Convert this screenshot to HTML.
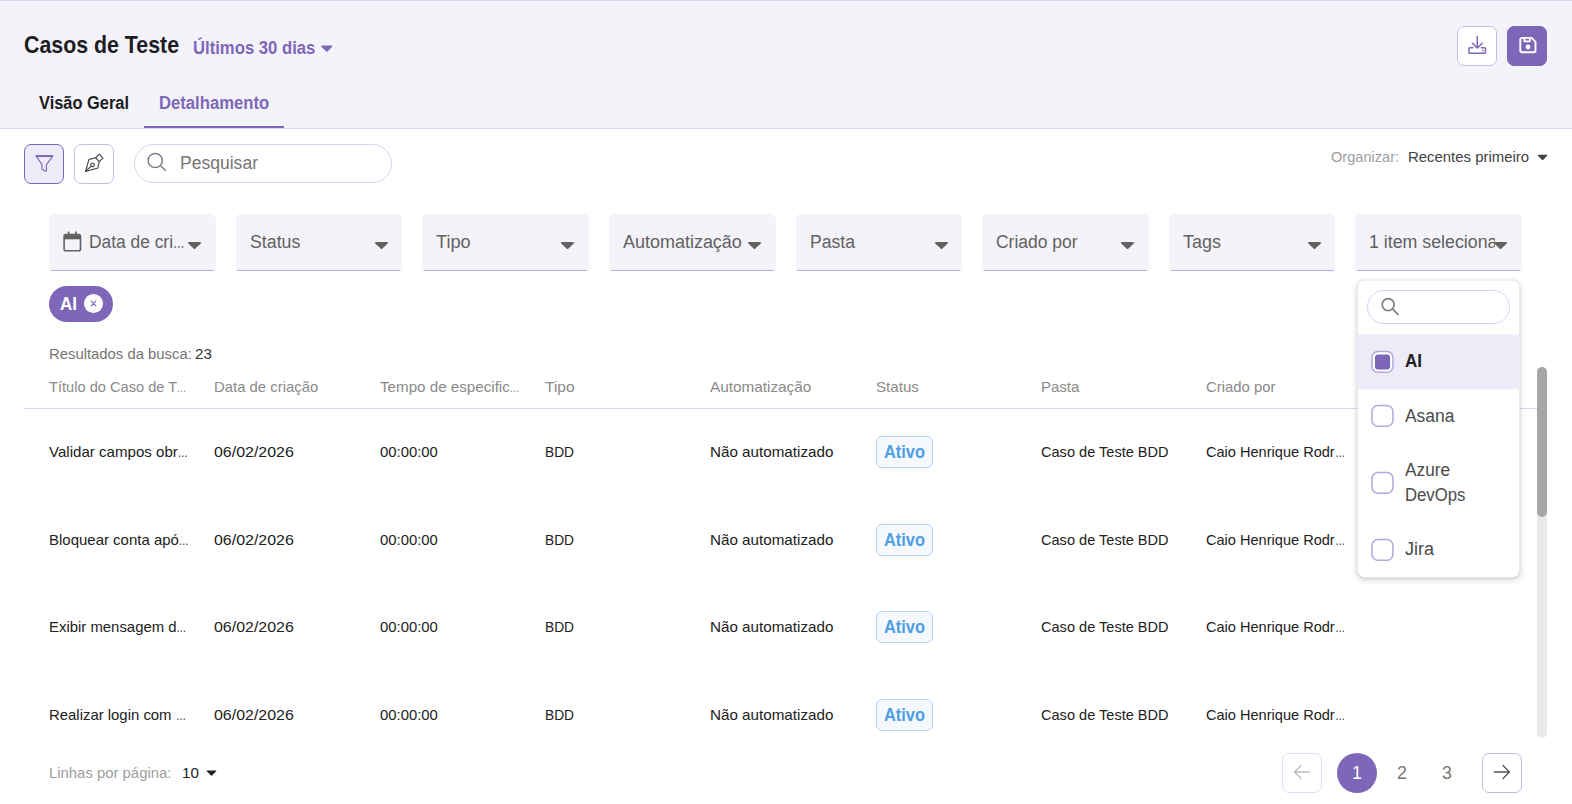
<!DOCTYPE html>
<html lang="pt-BR">
<head>
<meta charset="utf-8">
<title>Casos de Teste</title>
<style>
html,body{margin:0;padding:0}
body{width:1572px;height:804px;overflow:hidden;background:#fff;position:relative;font-family:"Liberation Sans",sans-serif;color:#212121}
.a{position:absolute}
.e{display:inline-block;width:.669em;transform:scaleX(.669);transform-origin:0 0}
.t{position:absolute;white-space:nowrap;line-height:20px;height:20px;transform-origin:0 0}
#hdr{left:0;top:0;width:1572px;height:127px;background:#f4f3fa;border-top:1px solid #dcd7f0;border-bottom:1px solid #dcd7f0}
.ibtn{position:absolute;width:38px;height:38px;border:1px solid #c8bde8;border-radius:7px;background:#fff}
.fbox{position:absolute;top:214px;width:166.625px;height:57px;background:#f4f3fa;border-radius:5px 5px 2px 2px}
.fbox i{position:absolute;left:1.8px;right:1.8px;bottom:0;height:1px;background:#b8aade}
.car{position:absolute;width:13px;height:7px}
.badge{position:absolute;left:876.1px;width:54.7px;height:29.5px;border:1px solid #b7d5f3;border-radius:6px;background:#f5f9fe}
</style>
</head>
<body>
<div id="hdr" class="a"></div>
<svg class="a" style="left:320px;top:44px" width="14" height="9" viewBox="0 0 14 9"><path d="M2 1.5h9.6a.8.8 0 0 1 .6 1.3L7.5 7.6a.8.8 0 0 1-1.2 0L1.4 2.8A.8.8 0 0 1 2 1.5z" fill="#7e66b8"/></svg>
<div class="a" style="left:144px;top:126px;width:140px;height:2px;background:#7e66b8"></div>

<!-- header buttons -->
<div class="ibtn" style="left:1457px;top:26px"></div>
<div class="ibtn" style="left:1507px;top:26px;background:#7e66b8;border-color:#7e66b8"></div>
<svg class="a" style="left:1467px;top:35px" width="20" height="20" viewBox="0 0 20 20" fill="none" stroke="#7e66b8" stroke-width="1.5" stroke-linecap="round" stroke-linejoin="round"><path d="M10.3 1.6v11.2M5.4 8.2l4.9 4.8 4.9-4.8"/><path d="M6 12.7H3a1.1 1.1 0 0 0-1.1 1.1v3.4A1.1 1.1 0 0 0 3 18.3h14.4a1.1 1.1 0 0 0 1.1-1.1v-3.4a1.1 1.1 0 0 0-1.1-1.1h-3"/><circle cx="15.8" cy="15.5" r=".35" fill="#7e66b8" stroke-width="1"/></svg>
<svg class="a" style="left:1518.5px;top:36px" width="18" height="18" viewBox="0 0 18 18" fill="none" stroke="#fff" stroke-width="1.9" stroke-linejoin="round"><path d="M2.6 1.9h9.6l3.9 3.9v8.7a1.7 1.7 0 0 1-1.7 1.7H2.6a1.7 1.7 0 0 1-1.7-1.7V3.6a1.7 1.7 0 0 1 1.7-1.7z" transform="translate(.4 0)"/><path d="M5.4 2.2v3.2h5.4V2.2" stroke-width="1.9"/><circle cx="9" cy="11" r="1.8" fill="#fff" stroke-width="1.2"/></svg>

<!-- toolbar -->
<div class="ibtn" style="left:24px;top:144px;background:#eeebf8;border-color:#7e66b8"></div>
<div class="ibtn" style="left:74px;top:144px"></div>
<div class="a" style="left:134px;top:144px;width:256px;height:37px;border:1px solid #d9d2f0;border-radius:20px;background:#fff"></div>
<svg class="a" style="left:34px;top:154px" width="21" height="19" viewBox="0 0 21 19" fill="none" stroke="#7e66b8" stroke-width="1.15" stroke-linejoin="round"><path d="M2 2h17l-6.6 8.6v6.3h-2L8 14.9v-4.3z"/><path d="M2 2.1h17" stroke-width="1.9"/></svg>
<svg class="a" style="left:84px;top:152px" width="21" height="21" viewBox="0 0 21 21" fill="none" stroke="#424242" stroke-width="1.1" stroke-linejoin="round" stroke-linecap="round"><path d="M15.3 2.1L19 6.1 15.2 9.6 11.7 5.8z"/><path d="M11.7 5.8L5 7.4 1.5 19.5 13.9 16l1.3-6.4"/><circle cx="8.5" cy="12.8" r="1.8"/><path d="M7.2 14.1L1.5 19.5"/></svg>
<svg class="a" style="left:146px;top:152px" width="21" height="20" viewBox="0 0 21 20" fill="none" stroke="#808080" stroke-width="1.5" stroke-linecap="round"><circle cx="9.2" cy="8.5" r="7.1"/><path d="M14.4 13.7l5 4.5"/></svg>
<svg class="a" style="left:1537px;top:154px" width="11" height="7" viewBox="0 0 11 7"><path d="M1.3 .8h8.4a.6.6 0 0 1 .45 1L6 6.1a.6.6 0 0 1-.9 0L.85 1.8a.6.6 0 0 1 .45-1z" fill="#424242"/></svg>

<!-- filters -->
<div class="fbox" style="left:49.000px"><i></i></div>
<div class="fbox" style="left:235.625px"><i></i></div>
<div class="fbox" style="left:422.250px"><i></i></div>
<div class="fbox" style="left:608.875px"><i></i></div>
<div class="fbox" style="left:795.500px"><i></i></div>
<div class="fbox" style="left:982.125px"><i></i></div>
<div class="fbox" style="left:1168.750px"><i></i></div>
<div class="fbox" style="left:1355.375px"><i></i></div>
<svg class="a" style="left:63px;top:231px" width="19" height="21" viewBox="0 0 19 21" fill="none" stroke="#616161" stroke-width="1.6"><rect x="1.1" y="3.6" width="16.4" height="16.2" rx="1.8"/><path d="M1.1 6.2h16.4" stroke-width="4.2"/><path d="M5.6 .6v3M13 .6v3" stroke-width="1.7"/></svg>

<!-- chip -->
<div class="a" style="left:49px;top:286px;width:64px;height:36px;border-radius:18px;background:#7e66b8"></div>
<div class="a" style="left:84.3px;top:294.2px;width:18.6px;height:18.6px;border-radius:50%;background:#fff"></div>
<svg class="a" style="left:90px;top:300px" width="7" height="7" viewBox="0 0 7 7" stroke="#7e66b8" stroke-width="1.2" stroke-linecap="round"><path d="M1.2 1.2l4.6 4.6M5.8 1.2l-4.6 4.6"/></svg>

<!-- table -->
<div class="a" style="left:24px;top:408px;width:1513px;height:1px;background:#dcd6f5"></div>
<div class="badge" style="top:436.2px"></div>
<div class="badge" style="top:524.2px"></div>
<div class="badge" style="top:611.2px"></div>
<div class="badge" style="top:699.0px"></div>

<!-- scrollbar -->
<div class="a" style="left:1537px;top:367px;width:10px;height:371px;border-radius:5px;background:#e9e9e9"></div>
<div class="a" style="left:1537px;top:367px;width:10px;height:150px;border-radius:5px;background:#a6a6a6"></div>

<!-- dropdown panel -->
<div class="a" id="panel" style="left:1357px;top:280px;width:162px;height:296.6px;transform:translate(.5px,.4px);border-radius:7px;background:#fff;box-shadow:0 2px 6px rgba(0,0,0,.17),0 0 2px rgba(0,0,0,.1);overflow:hidden">
<div class="a" style="left:0;top:53.5px;width:162px;height:55px;background:#eeebf8"></div>
</div>
<div class="a" style="left:1367px;top:290px;width:141px;height:32px;border:1px solid #d9d2f0;border-radius:17px;background:#fff"></div>
<svg class="a" style="left:1380px;top:297px" width="20" height="19" viewBox="0 0 20 19" fill="none" stroke="#808080" stroke-width="1.7" stroke-linecap="round"><circle cx="8.2" cy="7.6" r="6"/><path d="M12.7 12.1l5.3 5.3"/></svg>
<svg class="a" style="left:1370px;top:349.0px" width="25" height="25" viewBox="0 0 25 25"><rect x="1.95" y="2.45" width="21" height="20.8" rx="6" fill="#fff" stroke="#b5a6de" stroke-width="1.5"/><rect x="5" y="5.4" width="15.1" height="15" rx="3" fill="#7e66b8"/></svg>
<svg class="a" style="left:1370px;top:403.2px" width="25" height="25" viewBox="0 0 25 25"><rect x="1.95" y="2.45" width="21" height="20.8" rx="6" fill="#fff" stroke="#b5a6de" stroke-width="1.5"/></svg>
<svg class="a" style="left:1370px;top:470.2px" width="25" height="25" viewBox="0 0 25 25"><rect x="1.95" y="2.45" width="21" height="20.8" rx="6" fill="#fff" stroke="#b5a6de" stroke-width="1.5"/></svg>
<svg class="a" style="left:1370px;top:537.1px" width="25" height="25" viewBox="0 0 25 25"><rect x="1.95" y="2.45" width="21" height="20.8" rx="6" fill="#fff" stroke="#b5a6de" stroke-width="1.5"/></svg>

<!-- footer -->
<svg class="a" style="left:206px;top:770px" width="11" height="6" viewBox="0 0 11 6"><path d="M1.2 .4h8.6a.5.5 0 0 1 .4.9L6 5.5a.7.7 0 0 1-1 0L.8 1.3a.5.5 0 0 1 .4-.9z" fill="#212121"/></svg>
<div class="ibtn" style="left:1282px;top:753px;border-color:#e3ddf5"></div>
<svg class="a" style="left:1293px;top:764px" width="18" height="16" viewBox="0 0 18 16" fill="none" stroke="#bdbdbd" stroke-width="1.3" stroke-linecap="round" stroke-linejoin="round"><path d="M16.5 8H1.5M8 1.5L1.5 8 8 14.5"/></svg>
<div class="a" style="left:1337px;top:753px;width:40px;height:40px;border-radius:50%;background:#7e66b8"></div>
<div class="ibtn" style="left:1482px;top:753px;border-color:#c5b9e8"></div>
<svg class="a" style="left:1493px;top:764px" width="18" height="16" viewBox="0 0 18 16" fill="none" stroke="#555" stroke-width="1.3" stroke-linecap="round" stroke-linejoin="round"><path d="M1.5 8h15M10 1.5L16.5 8 10 14.5"/></svg>

<!-- texts -->
<div class="t" id="t_title" style="left:24.0px;top:35.0px;font-size:24px;color:#1c1b1f;transform:scaleX(0.8893);font-weight:bold">Casos de Teste</div>
<div class="t" id="t_last" style="left:193.0px;top:38.0px;font-size:17.6px;color:#7e66b8;transform:scaleX(0.9481);font-weight:bold">Últimos 30 dias</div>
<div class="t" id="t_tab1" style="left:39.0px;top:93.0px;font-size:17.6px;color:#1c1b1f;transform:scaleX(0.9328);font-weight:bold">Visão Geral</div>
<div class="t" id="t_tab2" style="left:159.0px;top:93.0px;font-size:17.6px;color:#7e66b8;transform:scaleX(0.9470);font-weight:bold">Detalhamento</div>
<div class="t" id="t_search" style="left:180.0px;top:153.0px;font-size:17.6px;color:#757575;transform:scaleX(0.9966)">Pesquisar</div>
<div class="t" id="t_org" style="left:1331.0px;top:147.0px;font-size:15px;color:#9e9e9e;transform:scaleX(0.9723)">Organizar:</div>
<div class="t" id="t_rec" style="left:1408.0px;top:147.0px;font-size:15px;color:#424242;transform:scaleX(0.9942)">Recentes primeiro</div>
<div class="t" id="f1" style="left:89.0px;top:232.0px;font-size:17.6px;color:#616161;transform:scaleX(0.9876)">Data de cri<span class="e">…</span></div>
<div class="t" id="f2" style="left:250.0px;top:232.0px;font-size:17.6px;color:#616161;transform:scaleX(1.0083)">Status</div>
<div class="t" id="f3" style="left:436.0px;top:232.0px;font-size:17.6px;color:#616161;transform:scaleX(1.0331)">Tipo</div>
<div class="t" id="f4" style="left:623.0px;top:232.0px;font-size:17.6px;color:#616161;transform:scaleX(1.0211)">Automatização</div>
<div class="t" id="f5" style="left:810.0px;top:232.0px;font-size:17.6px;color:#616161;transform:scaleX(0.9996)">Pasta</div>
<div class="t" id="f6" style="left:996.0px;top:232.0px;font-size:17.6px;color:#616161;transform:scaleX(0.9915)">Criado por</div>
<div class="t" id="f7" style="left:1183.0px;top:232.0px;font-size:17.6px;color:#616161;transform:scaleX(1.0238)">Tags</div>
<div class="a" style="left:1369.0px;top:230.0px;width:126px;height:24px;overflow:hidden"><div class="t" id="f8" style="left:0;top:2px;font-size:17.6px;color:#616161;transform:scaleX(1.0100)">1 item selecionado</div></div>
<div class="t" id="t_chip" style="left:60.0px;top:293.5px;font-size:17.6px;color:#fff;transform:scaleX(0.9644);font-weight:bold">AI</div>
<div class="t" id="t_res" style="left:49.0px;top:343.5px;font-size:15px;color:#757575;transform:scaleX(0.9899)">Resultados da busca:</div>
<div class="t" id="t_res2" style="left:195.3px;top:343.5px;font-size:15px;color:#333;transform:scaleX(1.0104)">23</div>
<div class="t" id="h1" style="left:49.0px;top:377.0px;font-size:15px;color:#8a8a8a;transform:scaleX(0.9750)">Título do Caso de T<span class="e">…</span></div>
<div class="t" id="h2" style="left:214.0px;top:377.0px;font-size:15px;color:#8a8a8a;transform:scaleX(0.9921)">Data de criação</div>
<div class="t" id="h3" style="left:380.0px;top:377.0px;font-size:15px;color:#8a8a8a;transform:scaleX(1.0108)">Tempo de especific<span class="e">…</span></div>
<div class="t" id="h4" style="left:545.0px;top:377.0px;font-size:15px;color:#8a8a8a;transform:scaleX(1.0332)">Tipo</div>
<div class="t" id="h5" style="left:710.0px;top:377.0px;font-size:15px;color:#8a8a8a;transform:scaleX(1.0210)">Automatização</div>
<div class="t" id="h6" style="left:875.5px;top:377.0px;font-size:15px;color:#8a8a8a;transform:scaleX(1.0084)">Status</div>
<div class="t" id="h7" style="left:1041.0px;top:377.0px;font-size:15px;color:#8a8a8a;transform:scaleX(0.9997)">Pasta</div>
<div class="t" id="h8" style="left:1206.0px;top:377.0px;font-size:15px;color:#8a8a8a;transform:scaleX(0.9915)">Criado por</div>
<div class="t" id="r1c1" style="left:49.0px;top:442.0px;font-size:15px;color:#212121;transform:scaleX(1.0053)">Validar campos obr<span class="e">…</span></div>
<div class="t" id="r1c2" style="left:214.0px;top:442.0px;font-size:15px;color:#212121;transform:scaleX(1.0632)">06/02/2026</div>
<div class="t" id="r1c3" style="left:380.0px;top:442.0px;font-size:15px;color:#212121;transform:scaleX(0.9907)">00:00:00</div>
<div class="t" id="r1c4" style="left:545.0px;top:442.0px;font-size:15px;color:#212121;transform:scaleX(0.9167)">BDD</div>
<div class="t" id="r1c5" style="left:710.0px;top:442.0px;font-size:15px;color:#212121;transform:scaleX(1.0132)">Não automatizado</div>
<div class="t" id="r1c7" style="left:1041.0px;top:442.0px;font-size:15px;color:#212121;transform:scaleX(0.9706)">Caso de Teste BDD</div>
<div class="t" id="r1c8" style="left:1206.0px;top:442.0px;font-size:15px;color:#212121;transform:scaleX(0.9709)">Caio Henrique Rodr<span class="e">…</span></div>
<div class="t" id="r1c6" style="left:884.0px;top:442.0px;font-size:17.6px;color:#4f9ee3;transform:scaleX(0.9320);font-weight:bold">Ativo</div>
<div class="t" id="r2c1" style="left:49.0px;top:530.0px;font-size:15px;color:#212121;transform:scaleX(0.9983)">Bloquear conta apó<span class="e">…</span></div>
<div class="t" id="r2c2" style="left:214.0px;top:530.0px;font-size:15px;color:#212121;transform:scaleX(1.0632)">06/02/2026</div>
<div class="t" id="r2c3" style="left:380.0px;top:530.0px;font-size:15px;color:#212121;transform:scaleX(0.9907)">00:00:00</div>
<div class="t" id="r2c4" style="left:545.0px;top:530.0px;font-size:15px;color:#212121;transform:scaleX(0.9167)">BDD</div>
<div class="t" id="r2c5" style="left:710.0px;top:530.0px;font-size:15px;color:#212121;transform:scaleX(1.0132)">Não automatizado</div>
<div class="t" id="r2c7" style="left:1041.0px;top:530.0px;font-size:15px;color:#212121;transform:scaleX(0.9706)">Caso de Teste BDD</div>
<div class="t" id="r2c8" style="left:1206.0px;top:530.0px;font-size:15px;color:#212121;transform:scaleX(0.9709)">Caio Henrique Rodr<span class="e">…</span></div>
<div class="t" id="r2c6" style="left:884.0px;top:530.0px;font-size:17.6px;color:#4f9ee3;transform:scaleX(0.9320);font-weight:bold">Ativo</div>
<div class="t" id="r3c1" style="left:49.0px;top:617.0px;font-size:15px;color:#212121;transform:scaleX(0.9935)">Exibir mensagem d<span class="e">…</span></div>
<div class="t" id="r3c2" style="left:214.0px;top:617.0px;font-size:15px;color:#212121;transform:scaleX(1.0632)">06/02/2026</div>
<div class="t" id="r3c3" style="left:380.0px;top:617.0px;font-size:15px;color:#212121;transform:scaleX(0.9907)">00:00:00</div>
<div class="t" id="r3c4" style="left:545.0px;top:617.0px;font-size:15px;color:#212121;transform:scaleX(0.9167)">BDD</div>
<div class="t" id="r3c5" style="left:710.0px;top:617.0px;font-size:15px;color:#212121;transform:scaleX(1.0132)">Não automatizado</div>
<div class="t" id="r3c7" style="left:1041.0px;top:617.0px;font-size:15px;color:#212121;transform:scaleX(0.9706)">Caso de Teste BDD</div>
<div class="t" id="r3c8" style="left:1206.0px;top:617.0px;font-size:15px;color:#212121;transform:scaleX(0.9709)">Caio Henrique Rodr<span class="e">…</span></div>
<div class="t" id="r3c6" style="left:884.0px;top:617.0px;font-size:17.6px;color:#4f9ee3;transform:scaleX(0.9320);font-weight:bold">Ativo</div>
<div class="t" id="r4c1" style="left:49.0px;top:705.0px;font-size:15px;color:#212121;transform:scaleX(0.9931)">Realizar login com <span class="e">…</span></div>
<div class="t" id="r4c2" style="left:214.0px;top:705.0px;font-size:15px;color:#212121;transform:scaleX(1.0632)">06/02/2026</div>
<div class="t" id="r4c3" style="left:380.0px;top:705.0px;font-size:15px;color:#212121;transform:scaleX(0.9907)">00:00:00</div>
<div class="t" id="r4c4" style="left:545.0px;top:705.0px;font-size:15px;color:#212121;transform:scaleX(0.9167)">BDD</div>
<div class="t" id="r4c5" style="left:710.0px;top:705.0px;font-size:15px;color:#212121;transform:scaleX(1.0132)">Não automatizado</div>
<div class="t" id="r4c7" style="left:1041.0px;top:705.0px;font-size:15px;color:#212121;transform:scaleX(0.9706)">Caso de Teste BDD</div>
<div class="t" id="r4c8" style="left:1206.0px;top:705.0px;font-size:15px;color:#212121;transform:scaleX(0.9709)">Caio Henrique Rodr<span class="e">…</span></div>
<div class="t" id="r4c6" style="left:884.0px;top:705.0px;font-size:17.6px;color:#4f9ee3;transform:scaleX(0.9320);font-weight:bold">Ativo</div>
<div class="t" id="o1" style="left:1405.0px;top:351.0px;font-size:17.6px;color:#212121;transform:scaleX(0.9644);font-weight:bold">AI</div>
<div class="t" id="o2" style="left:1405.0px;top:406.0px;font-size:17.6px;color:#4a4a4a;transform:scaleX(0.9904)">Asana</div>
<div class="t" id="o3" style="left:1405.0px;top:460.0px;font-size:17.6px;color:#4a4a4a;transform:scaleX(0.9819)">Azure</div>
<div class="t" id="o4" style="left:1405.0px;top:485.0px;font-size:17.6px;color:#4a4a4a;transform:scaleX(0.9495)">DevOps</div>
<div class="t" id="o5" style="left:1405.0px;top:539.0px;font-size:17.6px;color:#4a4a4a;transform:scaleX(1.0287)">Jira</div>
<div class="t" id="t_lin" style="left:49.0px;top:763.0px;font-size:15px;color:#9e9e9e;transform:scaleX(0.9916)">Linhas por página:</div>
<div class="t" id="t_ten" style="left:182.0px;top:763.0px;font-size:15px;color:#212121;transform:scaleX(1.0104)">10</div>
<div class="t" id="p1" style="left:1352.0px;top:763.0px;font-size:17.6px;color:#fff;transform:scaleX(1.0093)">1</div>
<div class="t" id="p2" style="left:1397.0px;top:763.0px;font-size:17.6px;color:#757575;transform:scaleX(1.0093)">2</div>
<div class="t" id="p3" style="left:1442.0px;top:763.0px;font-size:17.6px;color:#757575;transform:scaleX(1.0093)">3</div>

<!-- filter carets (above clipped text) -->
<svg class="car" style="left:188.2px;top:242px" viewBox="0 0 13 7"><path d="M.9 .1h11.2a.8.8 0 0 1 .6 1.4L7.2 6.7a1 1 0 0 1-1.4 0L.3 1.5A.8.8 0 0 1 .9.1z" fill="#616161"/></svg>
<svg class="car" style="left:375.2px;top:242px" viewBox="0 0 13 7"><path d="M.9 .1h11.2a.8.8 0 0 1 .6 1.4L7.2 6.7a1 1 0 0 1-1.4 0L.3 1.5A.8.8 0 0 1 .9.1z" fill="#616161"/></svg>
<svg class="car" style="left:561.2px;top:242px" viewBox="0 0 13 7"><path d="M.9 .1h11.2a.8.8 0 0 1 .6 1.4L7.2 6.7a1 1 0 0 1-1.4 0L.3 1.5A.8.8 0 0 1 .9.1z" fill="#616161"/></svg>
<svg class="car" style="left:748.2px;top:242px" viewBox="0 0 13 7"><path d="M.9 .1h11.2a.8.8 0 0 1 .6 1.4L7.2 6.7a1 1 0 0 1-1.4 0L.3 1.5A.8.8 0 0 1 .9.1z" fill="#616161"/></svg>
<svg class="car" style="left:935.2px;top:242px" viewBox="0 0 13 7"><path d="M.9 .1h11.2a.8.8 0 0 1 .6 1.4L7.2 6.7a1 1 0 0 1-1.4 0L.3 1.5A.8.8 0 0 1 .9.1z" fill="#616161"/></svg>
<svg class="car" style="left:1121.2px;top:242px" viewBox="0 0 13 7"><path d="M.9 .1h11.2a.8.8 0 0 1 .6 1.4L7.2 6.7a1 1 0 0 1-1.4 0L.3 1.5A.8.8 0 0 1 .9.1z" fill="#616161"/></svg>
<svg class="car" style="left:1308.2px;top:242px" viewBox="0 0 13 7"><path d="M.9 .1h11.2a.8.8 0 0 1 .6 1.4L7.2 6.7a1 1 0 0 1-1.4 0L.3 1.5A.8.8 0 0 1 .9.1z" fill="#616161"/></svg>
<svg class="car" style="left:1494.2px;top:242px" viewBox="0 0 13 7"><path d="M.9 .1h11.2a.8.8 0 0 1 .6 1.4L7.2 6.7a1 1 0 0 1-1.4 0L.3 1.5A.8.8 0 0 1 .9.1z" fill="#616161"/></svg>

</body>
</html>
